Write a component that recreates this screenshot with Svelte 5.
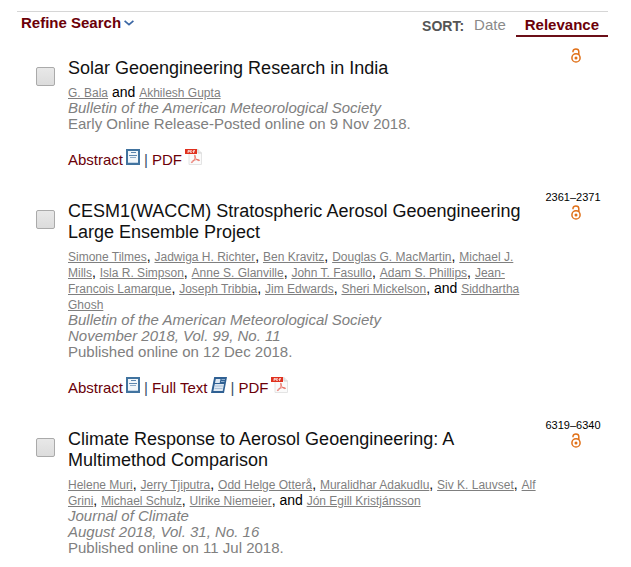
<script lang="ts">
	type Kind = 'abstract' | 'full' | 'pdf';

	interface Article {
		title: string;
		authors: string[];
		journal: string;
		issue?: string;
		published: string;
		pages?: string;
		links: Kind[];
	}

	const labels: Record<Kind, string> = {
		abstract: 'Abstract',
		full: 'Full Text',
		pdf: 'PDF'
	};

	const articles: Article[] = [
		{
			title: 'Solar Geoengineering Research in India',
			authors: ['G. Bala', 'Akhilesh Gupta'],
			journal: 'Bulletin of the American Meteorological Society',
			published: 'Early Online Release-Posted online on 9 Nov 2018.',
			links: ['abstract', 'pdf']
		},
		{
			title: 'CESM1(WACCM) Stratospheric Aerosol Geoengineering Large Ensemble Project',
			authors: [
				'Simone Tilmes',
				'Jadwiga H. Richter',
				'Ben Kravitz',
				'Douglas G. MacMartin',
				'Michael J. Mills',
				'Isla R. Simpson',
				'Anne S. Glanville',
				'John T. Fasullo',
				'Adam S. Phillips',
				'Jean-Francois Lamarque',
				'Joseph Tribbia',
				'Jim Edwards',
				'Sheri Mickelson',
				'Siddhartha Ghosh'
			],
			journal: 'Bulletin of the American Meteorological Society',
			issue: 'November 2018, Vol. 99, No. 11',
			published: 'Published online on 12 Dec 2018.',
			pages: '2361–2371',
			links: ['abstract', 'full', 'pdf']
		},
		{
			title: 'Climate Response to Aerosol Geoengineering: A Multimethod Comparison',
			authors: [
				'Helene Muri',
				'Jerry Tjiputra',
				'Odd Helge Otterå',
				'Muralidhar Adakudlu',
				'Siv K. Lauvset',
				'Alf Grini',
				'Michael Schulz',
				'Ulrike Niemeier',
				'Jón Egill Kristjánsson'
			],
			journal: 'Journal of Climate',
			issue: 'August 2018, Vol. 31, No. 16',
			published: 'Published online on 11 Jul 2018.',
			pages: '6319–6340',
			links: []
		}
	];

	function separator(i: number, total: number) {
		if (i === 0) return '';
		if (i < total - 1) return ', ';
		return total > 2 ? ', and ' : ' and ';
	}
</script>

<main class="results">
	<header class="toolbar">
		<button class="refine" type="button">
			Refine Search
			<svg width="10" height="6" viewBox="0 0 10 6" aria-hidden="true">
				<path d="M.6.8 5 4.600 9.400.8" fill="none" stroke="#3a66a4" stroke-width="1.700" />
			</svg>
		</button>
		<nav class="sort">
			<span class="sort-label">SORT:</span>
			<a class="date" href="#date">Date</a>
			<a class="active" href="#relevance">Relevance</a>
		</nav>
	</header>

	{#each articles as article}
		<article class="item">
			<input type="checkbox" aria-label={article.title} />
			<div class="body">
				<h2>{article.title}</h2>
				<p class="authors">
					{#each article.authors as author, i}{separator(i, article.authors.length)}<a href="#author">{author}</a>{/each}
				</p>
				<p class="meta"><em>{article.journal}</em></p>
				{#if article.issue}
					<p class="meta"><em>{article.issue}</em></p>
				{/if}
				<p class="meta">{article.published}</p>
				{#if article.links.length}
					<p class="links">
						{#each article.links as kind, i}
							{#if i > 0}<span class="bar">|</span>{/if}
							<a href="#{kind}">{labels[kind]}{@render icon(kind)}</a>
						{/each}
					</p>
				{/if}
			</div>
			<aside>
				{#if article.pages}<span>{article.pages}</span>{/if}
				<svg class="lock" width="10" height="15" viewBox="0 0 10 15" role="img" aria-label="Open access">
					<g fill="none" stroke="#e07018" stroke-width="1.500">
						<circle cx="5" cy="9.900" r="4.100" />
						<path d="M2 4.200V3.500a2.900 2.600 0 0 1 5.800 0V7" />
					</g>
					<circle cx="5" cy="9.900" r="1.500" fill="#e07018" />
				</svg>
			</aside>
		</article>
	{/each}
</main>

{#snippet icon(kind: Kind)}
	{#if kind === 'abstract'}
		<svg class="icon" width="14" height="16" viewBox="0 0 14 16" aria-hidden="true">
			<rect x="1" y="1" width="12" height="14" fill="#f1f6fa" stroke="#41739f" stroke-width="2" />
			<path d="M5 3.500h5M3 6.500h8" stroke="#5d86ae" />
			<path d="M4 8.500h6" stroke="#8eabc8" />
			<path d="M2 13.500h10" stroke="#c3d5e6" />
		</svg>
	{:else if kind === 'full'}
		<svg class="icon" width="16" height="16" viewBox="0 0 16 16" aria-hidden="true">
			<path d="M3.200 0H16l-3 16H0z" fill="#2f6093" />
			<path d="M4.800 2h4.700l-.8 4H4z" fill="#dfe9f3" />
			<path d="M10.500 2.500h3.500M10 4.500h3.500" stroke="#8fb0d0" />
			<path d="M3.800 7h9.200l-1.300 7H2.400z" fill="#dfe9f3" />
			<path d="M4 9h8M3.500 11.500h8" stroke="#a9c0d8" />
		</svg>
	{:else}
		<svg class="icon" width="17" height="16" viewBox="0 0 17 16" aria-hidden="true">
			<path d="M4 .5h9l3.500 3.500v11.500H4z" fill="#fafafa" stroke="#e4e4e4" />
			<path d="M13 .5v3.500h3.500" fill="#ececec" stroke="#d2d2d2" />
			<rect width="12" height="5" fill="#e0301e" />
			<path d="M3 4V1.500h1.500v1.200H3M5.500 1.500v2h1l.5-1-.5-1zM8.500 4V1.500H10M8.500 2.700h1.200" fill="none" stroke="#fff" stroke-width=".7" />
			<path d="M9.800 6.200c1 0 .4 2.400-.4 4.200-.8 1.800-2.200 3.600-2.900 3.200-.7-.7 1.700-2.400 4-2.800 2.200-.5 4.200-.2 4 .6-.5.8-2.400-.3-3.500-1.700-1-1.300-1.900-3.400-1.200-3.500z" fill="none" stroke="#e8695c" stroke-width=".9" />
		</svg>
	{/if}
{/snippet}

<style>
	:global(body) {
		margin: 0;
		background: #fff;
	}

	.results {
		padding: 11px 23px 8px 17px;
		font: 15px/16px 'Liberation Sans', Arial, sans-serif;
		color: #000;
	}

	.toolbar {
		display: flex;
		justify-content: space-between;
		align-items: flex-start;
		border-top: 1px solid #d6d6d6;
	}

	.refine {
		display: flex;
		align-items: center;
		gap: 3px;
		margin: 0;
		padding: 3px 4px;
		border: 0;
		background: none;
		font: bold 15px/16px 'Liberation Sans', Arial, sans-serif;
		color: #6b0008;
		cursor: pointer;
	}

	.sort {
		display: flex;
		align-items: flex-start;
	}

	.sort a {
		text-decoration: none;
	}

	.sort-label {
		padding-top: 6px;
		font-size: 14px;
		font-weight: bold;
		color: #555;
	}

	.date {
		padding: 5px 10px;
		color: #8a8a8a;
	}

	.active {
		padding: 5px 9px 2px;
		border-bottom: 2px solid #6b0f18;
		font-weight: bold;
		color: #6b0008;
	}

	.item {
		display: flex;
		align-items: flex-start;
		margin-bottom: 33px;
	}

	.item:last-child {
		margin-bottom: 0;
	}

	.toolbar + .item {
		margin-top: 20px;
	}

	input {
		appearance: none;
		flex: none;
		width: 19px;
		height: 19px;
		margin: 9px 13px 0 19px;
		border: 1px solid #aaa;
		border-radius: 2px;
		background: linear-gradient(#e8e8e8, #dcdcdc);
	}

	.body {
		flex: 1;
		min-width: 0;
	}

	h2 {
		margin: 0 0 5px;
		font-size: 18px;
		font-weight: normal;
		line-height: 21px;
		color: #111;
	}

	p {
		margin: 0;
	}

	.authors {
		font-size: 14px;
	}

	.authors a {
		font-size: 12px;
		line-height: 12px;
		color: #7f7f7f;
	}

	.meta {
		color: #808080;
	}

	.links {
		display: flex;
		gap: 4px;
		margin-top: 20px;
	}

	.links a {
		display: flex;
		gap: 3px;
		color: #6b0008;
		text-decoration: none;
	}

	.bar {
		color: #35506b;
	}

	.icon {
		margin-top: -3px;
	}

	aside {
		flex: none;
		display: flex;
		flex-direction: column;
		align-items: center;
		width: 70px;
		margin-top: -11px;
		font-size: 11px;
		line-height: 14px;
	}

	.lock {
		margin: 1px 0 0 6px;
	}
</style>
